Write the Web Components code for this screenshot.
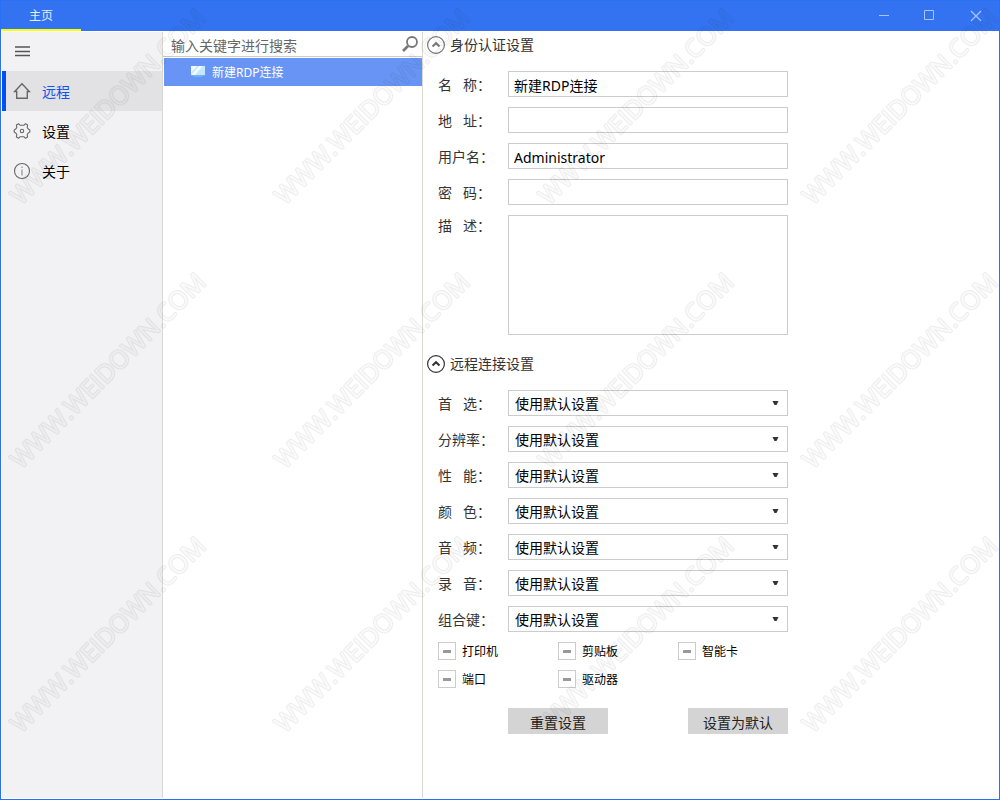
<!DOCTYPE html>
<html lang="zh-CN">
<head>
<meta charset="utf-8">
<title>主页</title>
<style>
  html, body { margin: 0; height: 100%; }
  body {
    font-family: "Noto Sans", "Noto Sans CJK SC", sans-serif;
    font-size: 14px;
    line-height: 20px;
    color: #333;
    background: #fff;
  }
</style>
</head>
<body>
<app-window>
  <title-bar slot="title" label="主页"></title-bar>
  <side-nav slot="nav">
    <nav-item icon="home" current>远程</nav-item>
    <nav-item icon="gear">设置</nav-item>
    <nav-item icon="info">关于</nav-item>
  </side-nav>
  <connection-list slot="list">
    <connection-item>新建RDP连接</connection-item>
  </connection-list>
  <settings-panel slot="main">
    <form-section heading="身份认证设置" dim>
      <text-field label="名   称：" value="新建RDP连接"></text-field>
      <text-field label="地   址："></text-field>
      <text-field label="用户名：" value="Administrator"></text-field>
      <text-field label="密   码：" type="password"></text-field>
      <text-field label="描   述：" multiline></text-field>
    </form-section>
    <form-section heading="远程连接设置">
      <select-field label="首   选："></select-field>
      <select-field label="分辨率："></select-field>
      <select-field label="性   能："></select-field>
      <select-field label="颜   色："></select-field>
      <select-field label="音   频："></select-field>
      <select-field label="录   音："></select-field>
      <select-field label="组合键："></select-field>
      <check-group>
        <check-option label="打印机"></check-option>
        <check-option label="剪贴板"></check-option>
        <check-option label="智能卡"></check-option>
        <check-option label="端口"></check-option>
        <check-option label="驱动器"></check-option>
      </check-group>
      <action-row>
        <action-button>重置设置</action-button>
        <action-button>设置为默认</action-button>
      </action-row>
    </form-section>
  </settings-panel>
</app-window>
<page-watermark text="WWW.WEIDOWN.COM"></page-watermark>

<script>
const define = (name, render, after) => customElements.define(name, class extends HTMLElement {
  connectedCallback() {
    if (this.shadowRoot) return;
    const root = this.attachShadow({ mode: 'open' });
    const base = '<style>*{box-sizing:border-box}:host{box-sizing:border-box}</style>';
    root.innerHTML = base + render(this);
    if (after) after(this, root);
  }
});

define('app-window', () => `
  <style>
    :host { display: flex; flex-direction: column; min-height: 100vh; border: 1px solid #2b6ff6; border-top: 0; background: #fff; }
    .body { flex: 1; display: grid; grid-template-columns: 162px 260px 1fr; }
  </style>
  <slot name="title"></slot>
  <div class="body"><slot name="nav"></slot><slot name="list"></slot><slot name="main"></slot></div>`);

define('title-bar', el => `
  <style>
    :host { display: flex; justify-content: space-between; height: 31px; background: #3373f2; border-top: 1px solid #2b6ff6; }
    a { width: 80px; border-bottom: 2px solid #ff0; color: #e6eeff; font-size: 12px; line-height: 30px; text-align: center; text-decoration: none; }
    .controls { display: flex; }
    button { width: 46px; padding: 0; border: 0; background: none; color: #a9c4fa; }
    svg { display: block; margin: 0 auto; }
  </style>
  <a href="#home">${el.getAttribute('label')}</a>
  <div class="controls">
    <button aria-label="最小化"><svg width="12" height="12" stroke="currentColor"><path d="M1 5.500h10"/></svg></button>
    <button aria-label="最大化"><svg width="12" height="12" fill="none" stroke="currentColor"><path d="M.5 .5h9v9h-9z"/></svg></button>
    <button aria-label="关闭"><svg width="12" height="12" stroke="currentColor" stroke-width="1.200"><path d="M1 1l10 10M11 1L1 11"/></svg></button>
  </div>`);

define('side-nav', () => `
  <style>
    :host { display: block; margin: 1px 0 1px 1px; background: #f2f2f4; border-right: 1px solid #d9d9d3; }
    button { display: block; width: 40px; height: 39px; padding: 0 0 0 13px; border: 0; background: none; }
    svg { display: block; }
  </style>
  <button aria-label="菜单"><svg width="16" height="12" stroke="#555" stroke-width="1.300"><path d="M0 1h15M0 5.500h15M0 9.500h15"/></svg></button>
  <nav><slot></slot></nav>`);

const navIcons = {
  home: '<path stroke-width="1.400" d="M9 1.800L1.700 9.500H3.700V16.300H14.300V9.500H16.300Z"/>',
  gear: '<path stroke-linejoin="round" d="M7.200 3.300H10.800L12.500 1.700 14.600 2.900 14.200 5.500Q14.800 7 16.800 8V10Q14.800 11 14.200 12.500L14.600 15.100 12.500 16.300 10.800 14.700H7.200L5.500 16.300 3.400 15.100 3.800 12.500Q3.200 11 1.200 10V8Q3.200 7 3.800 5.500L3.400 2.900 5.500 1.700Z"/><circle cx="9" cy="9" r="1.700"/>',
  info: '<circle cx="9" cy="9" r="7.500"/><path d="M9 7.500v6M9 4.500v1.500" stroke="#888"/>'
};
define('nav-item', el => {
  const on = el.hasAttribute('current');
  return `
  <style>
    :host { display: block; }
    a { display: flex; align-items: center; height: 40px; gap: 11px; padding-left: 7px; border-left: 4px solid ${on ? '#0050f0' : 'transparent'};
        background: ${on ? '#e2e2e4' : 'none'}; color: ${on ? '#0f55ee' : '#000'}; text-decoration: none; }
    span { padding-top: 2px; }
  </style>
  <a href="#${el.getAttribute('icon')}"><svg width="18" height="18" fill="none" stroke="#666" stroke-width="1.100">${navIcons[el.getAttribute('icon')]}</svg><span><slot></slot></span></a>`;
});

define('connection-list', () => `
  <style>
    :host { display: block; margin: 1px 0; border-right: 1px solid #d9d9d3; }
    .search { display: flex; align-items: center; height: 25px; border-bottom: 1px solid #ccc; }
    input { flex: 1; min-width: 0; height: 24px; padding: 2px 0 0 8px; border: 0; outline: 0; background: none; font: inherit; color: #333; }
    input::placeholder { color: #666; opacity: 1; }
    button { width: 24px; height: 24px; padding: 0 4px; border: 0; background: none; }
    svg { display: block; }
    .items { padding: 1px 0 0 1px; }
  </style>
  <div class="search"><input type="search" aria-label="搜索" placeholder="输入关键字进行搜索">
  <button aria-label="搜索"><svg width="16" height="16" fill="none" stroke="#777"><circle cx="10" cy="6" r="5" stroke-width="1.800"/><path d="M6 10L1 15" stroke-width="2.600"/></svg></button></div>
  <div class="items"><slot></slot></div>`);

define('connection-item', () => `
  <style>
    :host { display: block; }
    a { display: flex; align-items: center; gap: 7px; height: 28px; padding-left: 27px; background: #6895f5; color: #fff; font-size: 12px; text-decoration: none; }
    span { padding-top: 2px; }
  </style>
  <a href="#connection"><svg width="14" height="12"><path fill="#c5e6fb" d="M0 0h14v9H0z"/><path fill="#f1faff" d="M0 0h6L0 7zM8 0h4L4 9H0z"/><path fill="#6cb4f5" d="M0 9h14v1H0zM3 10h8v1H3z"/></svg><span><slot></slot></span></a>`);

define('settings-panel', () => `
  <style>:host { display: flex; flex-direction: column; gap: 15px; padding: 0 16px 16px 4px; }</style>
  <slot></slot>`);

define('form-section', el => `
  <style>
    :host { display: block; }
    button { display: flex; align-items: center; gap: 5px; height: 27px; padding: 0; border: 0; background: none; color: #333; font: inherit; }
    .fields { display: flex; flex-direction: column; gap: 10px; max-width: 361px; padding: 13px 0 0 11px; }
  </style>
  <button aria-expanded="true"><svg width="18" height="18" fill="none" stroke="${el.hasAttribute('dim') ? '#777' : '#333'}"><circle cx="9" cy="9" r="8.400" stroke-width="1.200"/><path d="M5.500 10.500L9 7.200l3.500 3.300" stroke-width="2"/></svg><span>${el.getAttribute('heading')}</span></button>
  <div class="fields"><slot></slot></div>`);

const fieldStyle = `
    :host { display: grid; grid-template-columns: 70px 1fr; }
    label { padding-top: 4px; white-space: pre; }
    input, textarea, select { width: 100%; height: 26px; margin: 0; border: 1px solid #ccc; border-radius: 0; outline: 0; background: #fff; color: #000; font: inherit; }`;

define('text-field', el => {
  const multi = el.hasAttribute('multiline');
  return `
  <style>${fieldStyle}
    label { padding-top: ${multi ? 1 : 4}px; }
    input { padding: 2px 5px 0; }
    textarea { display: block; height: 120px; padding: 4px 5px; resize: none; }
  </style>
  <label for="field">${el.getAttribute('label')}</label>
  ${multi ? '<textarea id="field"></textarea>'
    : `<input id="field" type="${el.getAttribute('type') || 'text'}" value="${el.getAttribute('value') || ''}">`}`;
});

define('select-field', el => `
  <style>${fieldStyle}
    .box { display: grid; align-items: center; }
    .box > * { grid-area: 1 / 1; }
    select { appearance: none; padding: 2px 6px 0; }
    svg { justify-self: end; margin-right: 9px; pointer-events: none; }
  </style>
  <label for="field">${el.getAttribute('label')}</label>
  <div class="box"><select id="field"><option>使用默认设置</option></select>
  <svg width="7" height="6"><path fill="#333" d="M.5 1h6L4.500 5h-2z"/></svg></div>`);

define('check-group', () => `
  <style>:host { display: grid; grid-template-columns: repeat(3, 120px); row-gap: 10px; }</style>
  <slot></slot>`);

define('check-option', el => `
  <style>
    :host { display: block; }
    label { display: flex; align-items: center; gap: 6px; height: 18px; color: #000; font-size: 12px; line-height: 18px; }
    input { appearance: none; display: grid; place-items: center; width: 18px; height: 18px; margin: 0; border: 1px solid #ccc; background: #fff; }
    input:indeterminate::before { content: ""; width: 8px; height: 3px; background: #999; }
    span { padding-top: 2px; }
  </style>
  <label><input type="checkbox"><span>${el.getAttribute('label')}</span></label>`,
  (el, root) => { root.querySelector('input').indeterminate = true; });

define('action-row', () => `
  <style>:host { display: flex; justify-content: space-between; padding: 10px 0 0 70px; }</style>
  <slot></slot>`);

define('action-button', () => `
  <style>
    :host { display: block; }
    button { display: block; width: 100px; height: 26px; padding: 4px 0 0; border: 0; background: #d4d4d4; color: #222; font: inherit; overflow: hidden; }
  </style>
  <button><slot></slot></button>`);

define('page-watermark', () => `
  <style>
    :host { position: fixed; inset: 0; overflow: hidden; pointer-events: none; mix-blend-mode: multiply; display: grid; grid-template-columns: repeat(4, 264px); grid-auto-rows: 264px; }
    svg { overflow: visible; }
    text { font: 25px "Open Sans", sans-serif; fill: #fafafa; stroke: #ededed; stroke-width: 2px; stroke-linejoin: round; paint-order: stroke; }
  </style>`,
  (el, root) => {
    for (let i = 0; i < 12; i++) {
      root.innerHTML += `<svg width="264" height="264" aria-hidden="true"><text transform="translate(21 206) rotate(-45)">${el.getAttribute('text')}</text></svg>`;
    }
  });
</script>
</body>
</html>
